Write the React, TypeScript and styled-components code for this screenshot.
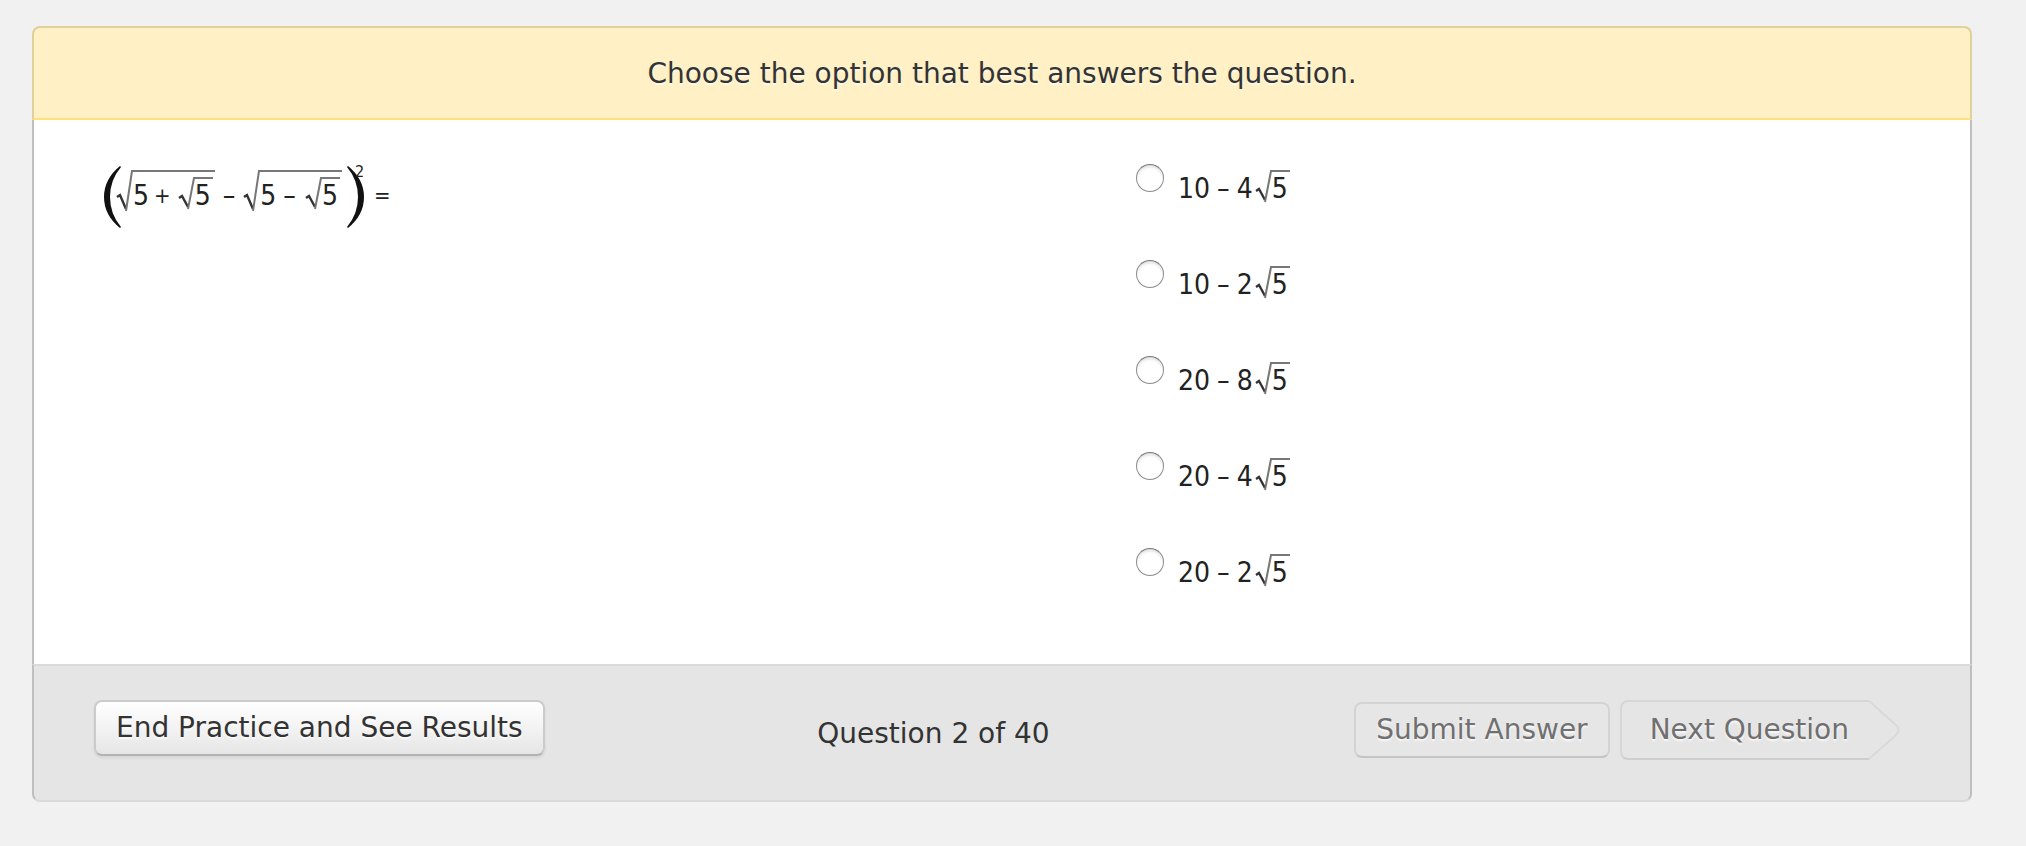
import React from "react";
import styled, { createGlobalStyle } from "styled-components";

const GlobalStyle = createGlobalStyle`
  * { box-sizing: border-box; }
  body {
    margin: 0;
    background: #f1f1f1;
    color: #333;
    font-family: "DejaVu Sans", Verdana, sans-serif;
    font-size: 28px;
    line-height: 36px;
  }
`;

const Page = styled.main`
  padding: 26px 54px 44px 32px;
`;

const Panel = styled.form`
  display: flex;
  flex-direction: column;
`;

const Instructions = styled.header`
  padding: 28px 24px 26px;
  border: 2px solid #dfd199;
  border-bottom-color: #ffe27a;
  border-radius: 8px 8px 0 0;
  background: #fff0c5;
  text-align: center;
  text-shadow: 0 2px 0 rgba(255, 255, 255, 0.6);
`;

const Content = styled.section`
  display: grid;
  grid-template-columns: 1fr 1fr;
  padding: 40px 0 20px;
  border: solid #bfbfbf;
  border-width: 0 2px;
  background: #fff;
`;

const Question = styled.div`
  padding-left: 70px;
`;

const Options = styled.fieldset`
  margin: 0;
  padding: 4px 0 0 134px;
  border: 0;
  min-width: 0;
`;

const OptionRow = styled.label`
  display: flex;
  align-items: flex-start;
  gap: 14px;
  height: 96px;
`;

const Radio = styled.input`
  appearance: none;
  flex: none;
  width: 28px;
  height: 28px;
  margin: 0;
  border: 1px solid #8c8c8c;
  border-top-color: #777;
  border-radius: 50%;
  background: #fff;
  box-shadow: inset 0 3px 3px -1px #ddd;

  &:checked {
    background: radial-gradient(circle, #333 0 5px, #fff 6px);
  }
`;

const Expression = styled.span<{ $top: number }>`
  display: flex;
  align-items: flex-start;
  padding-top: ${(p) => p.$top}px;
  color: #222;
  font-family: "DejaVu Sans Condensed", "DejaVu Sans", sans-serif;
  font-stretch: condensed;
  line-height: 32px;
`;

const Dash = styled.span<{ $gap: number }>`
  margin: 0 ${(p) => p.$gap}px;
`;

const Sign = styled.span`
  margin: 0 5px;
  font-size: 22px;
`;

const Root = styled.span`
  display: flex;
  align-items: flex-start;
`;

const Radicand = styled.span<{ $outer?: boolean }>`
  display: flex;
  margin-top: ${(p) => (p.$outer ? -10 : -3)}px;
  padding: ${(p) => (p.$outer ? "8px 2px 0 0" : "1px 2px 0 0")};
  border-top: 2px solid #777;
`;

const Hook = styled.svg<{ $outer?: boolean }>`
  flex: none;
  display: block;
  margin: ${(p) => (p.$outer ? "-10px 0 0" : "-3px 0 0 2px")};
`;

const Paren = styled.svg<{ $close?: boolean }>`
  flex: none;
  display: block;
  margin: ${(p) => (p.$close ? "-14px 0 0 5px" : "-14px -5px 0 0")};
`;

const Exponent = styled.sup`
  margin: -18px 0 0 -9px;
  font-size: 16px;
  line-height: 20px;
`;

const Equals = styled(Sign)`
  margin: 0 0 0 10px;
`;

const Footer = styled.footer`
  display: flex;
  align-items: flex-start;
  padding: 34px 70px 40px 60px;
  border: 2px solid #bfbfbf;
  border-top-color: #dadada;
  border-bottom-color: #dadada;
  border-radius: 0 0 8px 8px;
  background: #e5e5e5;
`;

const Progress = styled.p`
  flex: 1;
  margin: 0;
  padding: 16px 32px 0 0;
  text-align: center;
`;

const Button = styled.button<{ $muted?: boolean }>`
  margin: ${(p) => (p.$muted ? "2px 10px 0 0" : "0")};
  padding: 8px 20px;
  border: 2px solid ${(p) => (p.$muted ? "#d3d3d3" : "#cbcbcb")};
  border-bottom-color: ${(p) => (p.$muted ? "#c4c4c4" : "#b3b3b3")};
  border-radius: 8px;
  background: ${(p) => (p.$muted ? "#e6e6e6" : "linear-gradient(#fff, #e6e6e6)")};
  box-shadow: ${(p) => (p.$muted ? "none" : "0 2px 3px rgba(0, 0, 0, 0.07)")};
  color: ${(p) => (p.$muted ? "#707070" : "#333")};
  font: inherit;
  text-shadow: 0 2px 2px rgba(255, 255, 255, 0.75);
  white-space: nowrap;
`;

const ArrowButton = styled.button`
  display: flex;
  padding: 0;
  border: 0;
  background: none;
  color: #707070;
  font: inherit;
  text-shadow: 0 2px 2px rgba(255, 255, 255, 0.75);
  white-space: nowrap;
`;

const ArrowLabel = styled.span`
  padding: 10px 20px 10px 28px;
  border: 2px solid #d6d6d6;
  border-bottom-color: #cecece;
  border-right: 0;
  border-radius: 8px 0 0 8px;
`;

function SquareRoot({ outer, children }: { outer?: boolean; children: React.ReactNode }) {
  return (
    <Root>
      {outer ? (
        <Hook $outer width="17" height="42" viewBox="0 0 17 42" fill="none" aria-label="square root of">
          <path d="M1 27l3-2 6 14" stroke="#333" strokeWidth="2.4" />
          <path d="M10 41L16 1h1" stroke="#777" strokeWidth="2" />
        </Hook>
      ) : (
        <Hook width="17" height="34" viewBox="0 0 17 34" fill="none" aria-label="square root of">
          <path d="M1 21l3-2 6 11" stroke="#333" strokeWidth="2.4" />
          <path d="M10 32L16 1h1" stroke="#777" strokeWidth="2" />
        </Hook>
      )}
      <Radicand $outer={outer}>{children}</Radicand>
    </Root>
  );
}

const options = [
  { whole: "10", factor: "4" },
  { whole: "10", factor: "2" },
  { whole: "20", factor: "8" },
  { whole: "20", factor: "4" },
  { whole: "20", factor: "2" },
];

export default function App() {
  return (
    <>
      <GlobalStyle />
      <Page>
        <Panel onSubmit={(e) => e.preventDefault()}>
          <Instructions>Choose the option that best answers the question.</Instructions>
          <Content>
            <Question>
              <Expression $top={20}>
                <Paren width="17" height="62" viewBox="0 0 17 62" aria-label="(">
                  <path d="M16 0Q0 13 0 31T16 62L17 61Q6 48 6 31T17 1Z" fill="#111" />
                </Paren>
                <SquareRoot outer>
                  5<Sign>+</Sign>
                  <SquareRoot>5</SquareRoot>
                </SquareRoot>
                <Dash $gap={8}>–</Dash>
                <SquareRoot outer>
                  5<Dash $gap={7}>–</Dash>
                  <SquareRoot>5</SquareRoot>
                </SquareRoot>
                <Paren $close width="17" height="62" viewBox="0 0 17 62" aria-label=")">
                  <path d="M1 0Q17 13 17 31T1 62L0 61Q11 48 11 31T0 1Z" fill="#111" />
                </Paren>
                <Exponent>2</Exponent>
                <Equals>=</Equals>
              </Expression>
            </Question>
            <Options aria-label="Answers">
              {options.map((o) => (
                <OptionRow key={o.whole + o.factor}>
                  <Radio type="radio" name="answer" value={`${o.whole}-${o.factor}`} />
                  <Expression $top={9}>
                    {o.whole}
                    <Dash $gap={7}>–</Dash>
                    {o.factor}
                    <SquareRoot>5</SquareRoot>
                  </Expression>
                </OptionRow>
              ))}
            </Options>
          </Content>
          <Footer>
            <Button type="button">End Practice and See Results</Button>
            <Progress>Question 2 of 40</Progress>
            <Button type="submit" $muted>Submit Answer</Button>
            <ArrowButton type="button">
              <ArrowLabel>Next Question</ArrowLabel>
              <svg width="31" height="60" viewBox="0 0 31 60" fill="none" aria-hidden="true">
                <path d="M0 1L28 26Q31 30 28 34L0 59" stroke="#d9d9d9" strokeWidth="2" />
              </svg>
            </ArrowButton>
          </Footer>
        </Panel>
      </Page>
    </>
  );
}
